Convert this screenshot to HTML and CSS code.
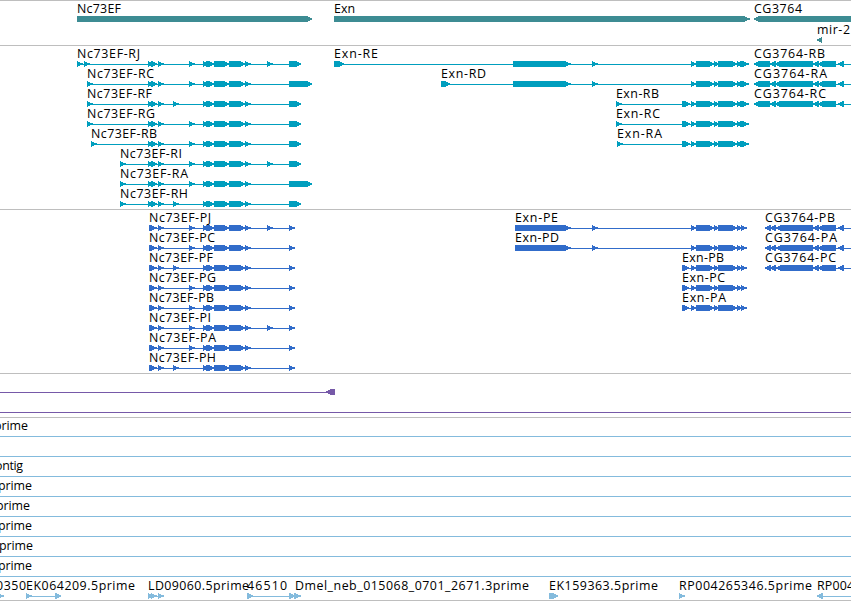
FILE: index.html
```html
<!DOCTYPE html>
<html lang="en">
<head>
    <meta charset="utf-8">
    <title>Exn region - genome browser</title>
    <link rel="stylesheet" href="styles.css">
</head>
<body>
    <div class="browser">
        <div class="track gene" id="genes"></div>
        <div class="track transcript" id="transcripts"></div>
        <div class="track cds" id="cds"></div>
        <div class="track insertion" id="insertions"></div>
        <div class="track est" id="ests"></div>
    </div>
    <script src="tracks.js"></script>
</body>
</html>
```
FILE: styles.css
```css
body {
    margin: 0;
    background-color: #fff;
    color: #000;
    font-family: "Open Sans", "Noto Sans", sans-serif;
    font-size: 12.4px;
    overflow: hidden;
}
.browser {
    display: flex;
    flex-direction: column;
    width: 851px;
    height: 600px;
    border-bottom: 1px solid #bebebe;
}
.track {
    border-top: 1px solid #bebebe;
    padding-bottom: 3px;
}
.row {
    display: block;
    width: 851px;
    height: 20px;
    overflow: visible;
}
.gene .row:first-child {
    height: 21px;
}
.est {
    padding-bottom: 2px;
}
.row text {
    fill: #000;
}
.row rect,
.row polygon {
    shape-rendering: crispEdges;
}

/* track colours */
.gene {
    fill: #3d8c93;
}
.transcript {
    fill: #009ebe;
}
.cds {
    fill: #316cca;
}
.insertion {
    fill: #7659a8;
}
.est {
    fill: #84bbdd;
}
```
FILE: tracks.js
```js
var W = 860;

// shared exon sets, [start, end]
var ncMid = [[203, 208], [206, 214], [214, 229], [229, 245], [245, 250.5]];
var exnEnd = [[691, 696], [696, 714], [714, 719], [718, 737], [737, 742], [740, 748.5]];
var exnCdsEnd = [[691, 696], [696, 714], [714, 719], [718, 737], [737, 742], [741, 746.5]];

function ncRna(first, extra, last) {
    return first.concat([[148, 153], [151, 157], [158, 163.5]], extra, ncMid, [last]);
}
function ncCds(extra) {
    return [[149, 153], [150, 156.5], [158, 163.5]].concat(extra, ncMid, [[289, 294.5]]);
}
var e173 = [[173, 178.5]], e189 = [[189, 194.5]], e189b = [[189, 194.5], [267, 272.5]];
var cgRna = [[753.5, 770], [770, 775.5], [775, 813], [813, 819], [818, 836], [838, 844]];
var cgCds = [[765, 770.5], [770, 775.5], [775.5, 813], [813, 819], [818, 836], [838, 844]];

// feature: label, label x, label width, blocks, options
function f(name, x, width, blocks, opt) {
    return { name: name, x: x, width: width, blocks: blocks || [], opt: opt || {} };
}
var rev = { rev: true };
var revOut = { rev: true, to: W };

var tracks = {
    genes: [
        [f("Nc73EF", 77, 44, [[77, 312]]), f("Exn", 334, 21, [[334, 749.5]]), f("CG3764", 754, 48, [[753.5, 870]], rev)],
        [f("mir-2", 817, 33, [[816.5, 822]], rev)]
    ],
    transcripts: [
        [f("Nc73EF-RJ", 77, 63, ncRna([[77, 82.5], [84, 89.5]], e189b, [289, 301])),
         f("Exn-RE", 334, 44, [[334, 344], [513, 570.5], [592, 597.5]].concat(exnEnd)),
         f("CG3764-RB", 754, 71, cgRna, revOut)],
        [f("Nc73EF-RC", 87, 67, ncRna([[87, 92.5]], e189, [289, 312])),
         f("Exn-RD", 441, 45, [[441, 450], [513, 570.5], [592, 597.5]].concat(exnEnd)),
         f("CG3764-RA", 754, 73, cgRna, revOut)],
        [f("Nc73EF-RF", 87, 65, ncRna([[87, 92.5]], e173, [289, 301])),
         f("Exn-RB", 616, 43, [[616, 621.5], [682, 690]].concat(exnEnd)),
         f("CG3764-RC", 754, 72, cgRna, revOut)],
        [f("Nc73EF-RG", 87, 68, ncRna([[87, 92.5]], e189, [289, 301])),
         f("Exn-RC", 616, 44, [[616, 621.5], [682, 690]].concat(exnEnd))],
        [f("Nc73EF-RB", 91, 66, ncRna([[91, 96.5]], e189, [289, 301])),
         f("Exn-RA", 617, 45, [[617, 622.5], [682, 690]].concat(exnEnd))],
        [f("Nc73EF-RI", 120, 62, ncRna([[120, 125.5]], e189b, [289, 301]))],
        [f("Nc73EF-RA", 120, 68, ncRna([[120, 125.5]], e189, [289, 312]))],
        [f("Nc73EF-RH", 120, 68, ncRna([[120, 125.5]], e173, [289, 301]))]
    ],
    cds: [
        [f("Nc73EF-PJ", 149, 62, ncCds(e189b)),
         f("Exn-PE", 515, 43, [[515, 570.5], [592, 597.5]].concat(exnCdsEnd)),
         f("CG3764-PB", 765, 70, cgCds, revOut)],
        [f("Nc73EF-PC", 149, 66, ncCds(e189)),
         f("Exn-PD", 515, 44, [[515, 570.5], [592, 597.5]].concat(exnCdsEnd)),
         f("CG3764-PA", 765, 72, cgCds, revOut)],
        [f("Nc73EF-PF", 149, 64, ncCds(e173)),
         f("Exn-PB", 682, 42, [[682, 689]].concat(exnCdsEnd)),
         f("CG3764-PC", 765, 71, cgCds, revOut)],
        [f("Nc73EF-PG", 149, 67, ncCds(e189)), f("Exn-PC", 682, 43, [[682, 689]].concat(exnCdsEnd))],
        [f("Nc73EF-PB", 149, 65, ncCds(e189)), f("Exn-PA", 682, 44, [[682, 689]].concat(exnCdsEnd))],
        [f("Nc73EF-PI", 149, 62, ncCds(e189b))],
        [f("Nc73EF-PA", 149, 67, ncCds(e189))],
        [f("Nc73EF-PH", 149, 67, ncCds(e173))]
    ],
    insertions: [
        [f("", 0, 0, [[326, 335]], { rev: true, from: 0 })],
        [f("", 0, 0, [], { from: 0, to: W })]
    ],
    ests: [
        [f("prime", -6, 34, [], { from: 0, to: W })],
        [f("", 0, 0, [], { from: 0, to: W })],
        [f("ontig", -5, 28, [], { from: 0, to: W })],
        [f("prime", -2, 34, [], { from: 0, to: W })],
        [f("prime", -4, 34, [], { from: 0, to: W })],
        [f("prime", -2, 34, [], { from: 0, to: W })],
        [f("prime", -1, 34, [], { from: 0, to: W })],
        [f("prime", -2, 34, [], { from: 0, to: W })],
        [f("0350", -4, 30, [[-2, 3.5]]),
         f("EK064209.5prime", 26, 109, [[26, 31.5], [55, 61]]),
         f("LD09060.5prime", 148, 101, [[148, 153], [151, 156.5], [158, 163.5]]),
         f("46510", 247, 40, [[247, 253], [289, 295], [294, 300.5]]),
         f("Dmel_neb_015068_0701_2671.3prime", 295, 234),
         f("EK159363.5prime", 549, 109, [[549, 558]]),
         f("RP004265346.5prime", 679, 133, [[679, 684.5]]),
         f("RP004", 817, 37, [[817, 822.5]], revOut)]
    ]
};

// block with a rounded-off arrow head, short blocks become plain triangles
function arrow(s, e, isRev) {
    var head = Math.min(5.5, e - s);
    var tip = isRev ? s : e;
    var back = isRev ? e : s;
    var d = isRev ? 1 : -1;
    var pts = [
        [back, 15], [tip + d * head, 15], [tip + d * 1.5, 16.9], [tip, 17.4],
        [tip, 18.6], [tip + d * 1.5, 19.1], [tip + d * head, 21], [back, 21]
    ];
    return '<polygon points="' + pts.join(" ") + '"/>';
}

function drawFeature(ft) {
    var out = "";
    var n = ft.blocks.length;
    if (n > 1 || ft.opt.from !== undefined || ft.opt.to !== undefined) {
        var from = ft.opt.from !== undefined ? ft.opt.from : ft.blocks[0][0] + 2;
        var to = ft.opt.to !== undefined ? ft.opt.to : ft.blocks[n - 1][1] - 2;
        out += '<rect x="' + from + '" y="18" width="' + (to - from) + '" height="1"/>';
    }
    ft.blocks.forEach(function(b) {
        out += arrow(b[0], b[1], ft.opt.rev);
    });
    if (ft.name) {
        out += '<text x="' + ft.x + '" y="12" textLength="' + ft.width + '">' + ft.name + '</text>';
    }
    return out;
}

Object.keys(tracks).forEach(function(id) {
    document.getElementById(id).innerHTML = tracks[id].map(function(row) {
        return '<svg class="row">' + row.map(drawFeature).join("") + '</svg>';
    }).join("");
});
```
